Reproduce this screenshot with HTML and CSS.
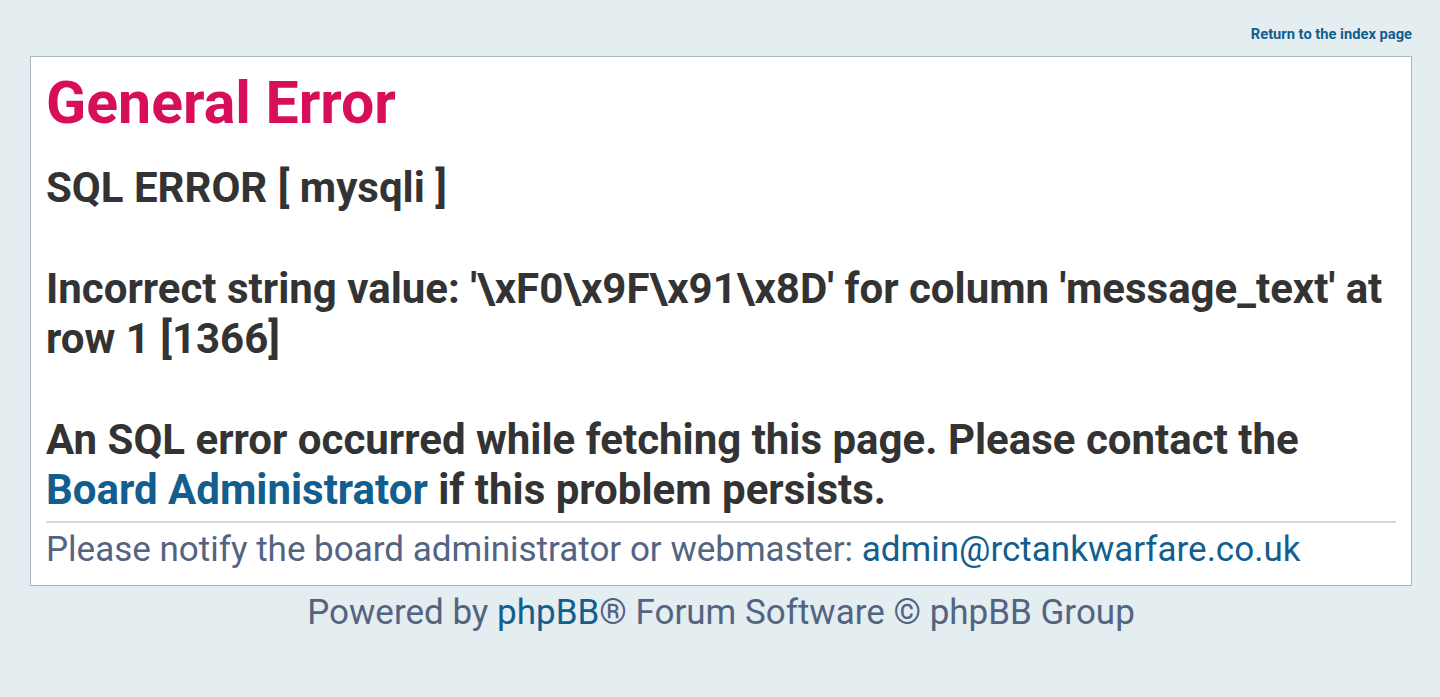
FILE: index.html
```html
<!DOCTYPE html>
<html lang="en">
<head>
<meta charset="utf-8">
<title>General Error</title>
<link rel="stylesheet" href="styles.css">
</head>
<body>
<div class="wrap">
  <div class="top-links"><a href="#" class="index-link">Return to the index page</a></div>
  <div class="panel">
    <h1 class="title">General Error</h1>
    <p class="message">SQL ERROR [ mysqli ]<br><br>Incorrect string value: '\xF0\x9F\x91\x8D' for column 'message_text' at row 1 [1366]<br><br>An SQL error occurred while fetching this page. Please contact the <a href="#">Board Administrator</a> if this problem persists.</p>
    <hr class="divider">
    <p class="notify">Please notify the board administrator or webmaster: <a href="#">admin@rctankwarfare.co.uk</a></p>
  </div>
  <p class="copyright">Powered by <a href="#">phpBB</a>® Forum Software © phpBB Group</p>
</div>
</body>
</html>
```
FILE: styles.css
```css
html, body {
  margin: 0;
  padding: 0;
  background: #e4edf0;
}
body {
  font-family: Roboto, "Liberation Sans", sans-serif;
  color: #333333;
}
a {
  color: #125e8e;
  text-decoration: none;
}
.wrap {
  padding: 0 28px 0 30px;
}
.top-links {
  text-align: right;
  padding-top: 25px;
  height: 56px;
  box-sizing: border-box;
  line-height: 18px;
}
.index-link {
  font-size: 14.7px;
  font-weight: bold;
}
.panel {
  background: #ffffff;
  border: 1px solid #a9b8c2;
  padding: 11px 15px 11px 15px;
}
.title {
  margin: 0 0 25px;
  font-size: 59px;
  font-weight: bold;
  color: #d70e5a;
  line-height: 70px;
}
.message {
  margin: 0;
  font-size: 42px;
  font-weight: bold;
  line-height: 50.4px;
}
.divider {
  border: 0;
  border-top: 2px solid #d8d8d8;
  margin: 5px 0 0;
  height: 0;
}
.notify {
  margin: 0;
  padding-top: 3px;
  font-size: 35px;
  line-height: 48px;
  color: #536482;
}
.copyright {
  margin: 4px 0 0;
  text-align: center;
  font-size: 35px;
  line-height: 46px;
  color: #536482;
}
```
